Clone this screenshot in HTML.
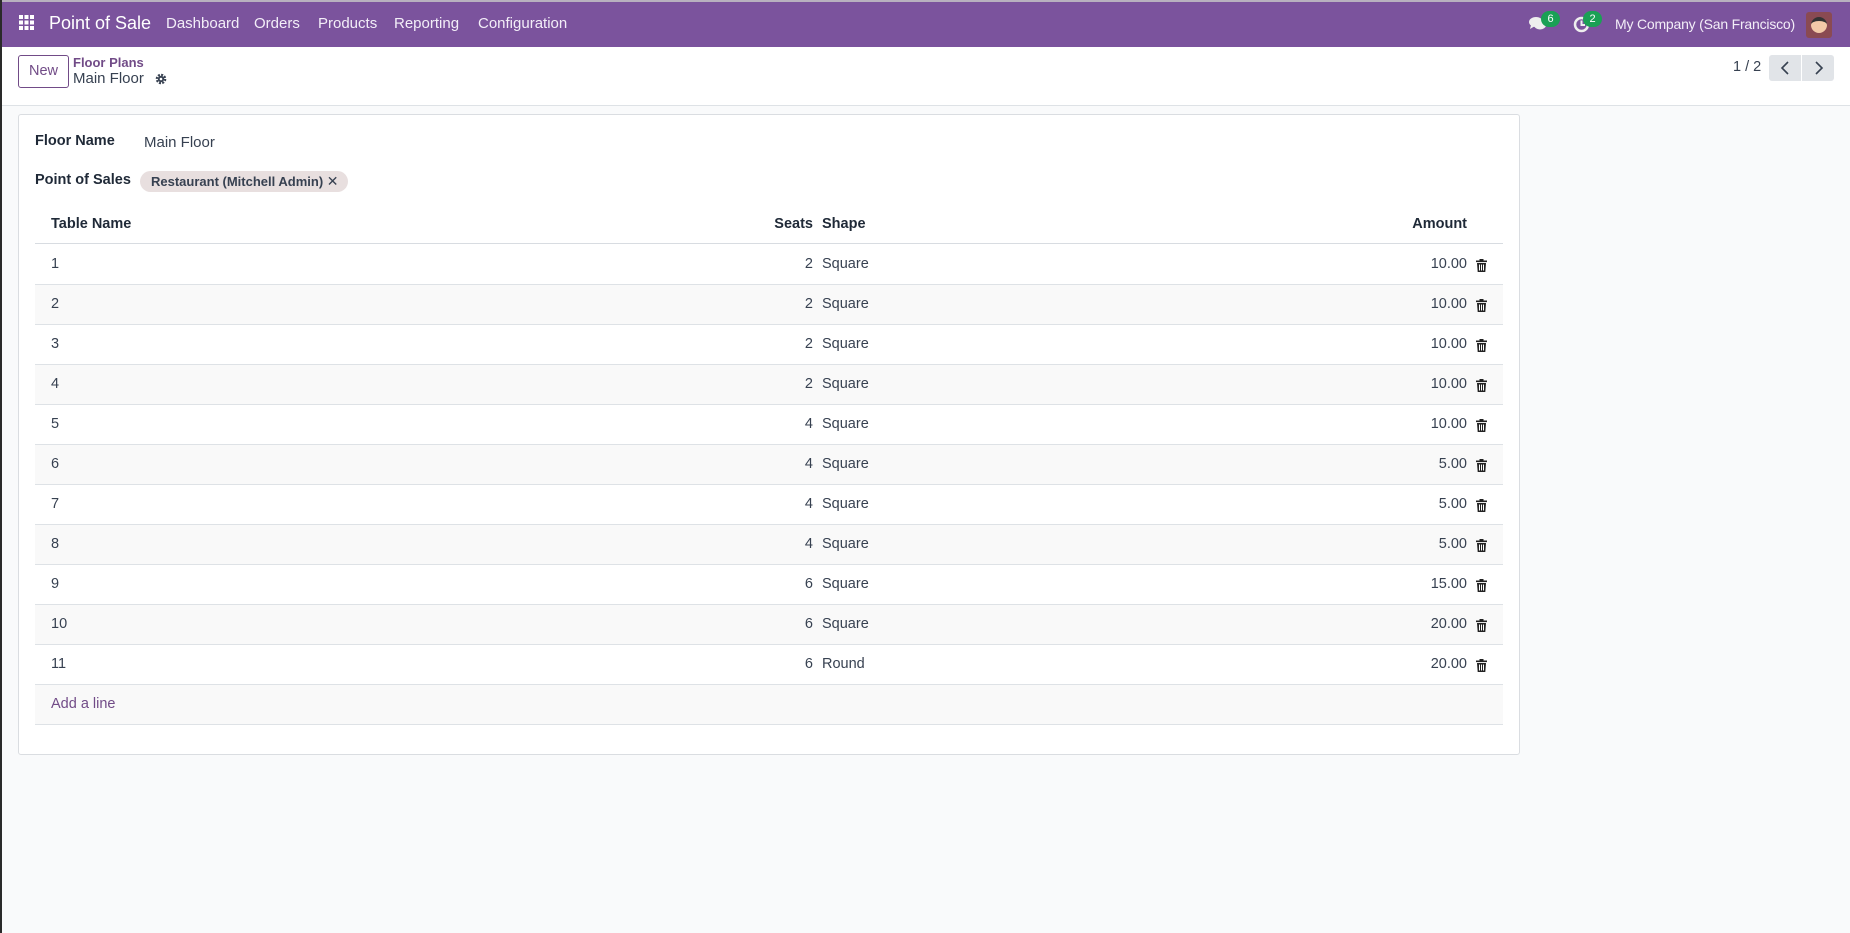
<!DOCTYPE html>
<html><head><meta charset="utf-8">
<style>
*{box-sizing:border-box;margin:0;padding:0}
body{width:1850px;height:933px;overflow:hidden;background:#f9fafb;font-family:"Liberation Sans",sans-serif;color:#374151;font-size:14.5px;position:relative}
.nav{position:absolute;left:0;top:0;width:1850px;height:47px;background:#7b539d;border-top:2px solid #b8b0bf;color:#fff}
.nav span{position:absolute;top:13px;font-size:15px;color:#f3eef8}
.cp{position:absolute;left:0;top:47px;width:1850px;height:59px;background:#fff;border-bottom:1px solid #dee2e6}
.abs{position:absolute}
.btn{position:absolute;left:18px;top:55px;width:51px;height:33px;border:1px solid #714b87;border-radius:3px;color:#714b87;font-size:14.5px;text-align:center;line-height:31px;background:#fff}
.sheet{position:absolute;left:18px;top:114px;width:1502px;height:641px;background:#fff;border:1px solid #dadde1;border-radius:3px}
.lbl{position:absolute;font-weight:bold;color:#1f2937;font-size:14.5px}
.row{position:absolute;left:35px;width:1468px;height:40px;border-bottom:1px solid #dee2e6;font-size:14.5px}
.row.g{background:#f9f9f9}
.row span{position:absolute;top:11px}
.trash{position:absolute;left:1441px;top:14px}
</style></head><body>
<div class="abs" style="left:0;top:0;width:2px;height:933px;background:#2a2a2a;z-index:5"></div>
<div class="nav">
 <svg class="abs" style="left:19px;top:13px" width="15" height="15" viewBox="0 0 15 15" fill="#fff"><rect x="0" y="0" width="4" height="4"/><rect x="5.5" y="0" width="4" height="4"/><rect x="11" y="0" width="4" height="4"/><rect x="0" y="5.5" width="4" height="4"/><rect x="5.5" y="5.5" width="4" height="4"/><rect x="11" y="5.5" width="4" height="4"/><rect x="0" y="11" width="4" height="4"/><rect x="5.5" y="11" width="4" height="4"/><rect x="11" y="11" width="4" height="4"/></svg>
 <span style="left:49px;top:11px;font-size:18px;color:#fff">Point of Sale</span>
 <span style="left:166px">Dashboard</span>
 <span style="left:254px">Orders</span>
 <span style="left:318px">Products</span>
 <span style="left:394px">Reporting</span>
 <span style="left:478px">Configuration</span>
 <svg class="abs" style="left:1529px;top:14px" width="18" height="16" viewBox="0 0 18 16" fill="#eee"><ellipse cx="7" cy="6" rx="7" ry="5"/><path d="M2 9 L1 13 L6 10Z"/><ellipse cx="11" cy="9" rx="6" ry="4.5"/></svg>
 <div class="abs" style="left:1541px;top:9px;width:19px;height:16px;border-radius:8px;background:#1aa055;color:#fff;font-size:11px;text-align:center;line-height:16px">6</div>
 <svg class="abs" style="left:1573px;top:14px" width="17" height="17" viewBox="0 0 17 17"><circle cx="8.5" cy="8.5" r="6.5" fill="none" stroke="#eee" stroke-width="2.5"/><path d="M8.5 4.5V9H12" stroke="#eee" stroke-width="2" fill="none"/></svg>
 <div class="abs" style="left:1583px;top:9px;width:19px;height:16px;border-radius:8px;background:#1aa055;color:#fff;font-size:11px;text-align:center;line-height:16px">2</div>
 <span style="left:1615px;font-size:14px;letter-spacing:-0.2px;top:14px">My Company (San Francisco)</span>
 <div class="abs" style="left:1806px;top:10px;width:26px;height:26px;border-radius:3px;background:#8a4a52"><div style="margin:5px auto;width:16px;height:16px;border-radius:50%;background:#f2c9a8;border-top:4px solid #333"></div></div>
</div>
<div class="cp"></div>
<div class="btn">New</div>
<div class="abs" style="left:73px;top:55px;color:#714b87;font-size:13px;font-weight:bold">Floor Plans</div>
<div class="abs" style="left:73px;top:70px;color:#374151;font-size:15px">Main Floor</div>
<svg class="abs" style="left:148px;top:73px" width="12" height="12" viewBox="0 0 12 12"><circle cx="6" cy="6" r="4.2" fill="none" stroke="#374151" stroke-width="2.2" stroke-dasharray="2 1.3"/><circle cx="6" cy="6" r="3.2" fill="#374151"/><circle cx="6" cy="6" r="1.3" fill="#fff"/></svg>
<div class="abs" style="left:1733px;top:59px;font-size:14.5px;color:#374151">1 / 2</div>
<div class="abs" style="left:1769px;top:55px;width:32px;height:26px;background:#e1e4e8;border-radius:3px 0 0 3px"></div>
<div class="abs" style="left:1802px;top:55px;width:32px;height:26px;background:#e1e4e8;border-radius:0 3px 3px 0"></div>
<svg class="abs" style="left:1780px;top:61px" width="10" height="14" viewBox="0 0 10 14"><path d="M8 1L2 7L8 13" fill="none" stroke="#374151" stroke-width="1.6"/></svg>
<svg class="abs" style="left:1814px;top:61px" width="10" height="14" viewBox="0 0 10 14"><path d="M2 1L8 7L2 13" fill="none" stroke="#374151" stroke-width="1.6"/></svg>

<div class="sheet"></div>
<div class="lbl" style="left:35px;top:133px">Floor Name</div>
<div class="abs" style="left:144px;top:134px;font-size:15px">Main Floor</div>
<div class="lbl" style="left:35px;top:172px">Point of Sales</div>
<div class="abs" style="left:140px;top:171px;width:208px;height:21px;border-radius:11px;background:#e8dfdf;font-size:13px;font-weight:bold;color:#374151;line-height:21px;padding-left:11px">Restaurant (Mitchell Admin) <span style="font-weight:normal;font-size:14px">✕</span></div>

<div class="row" style="top:204px;border-bottom:1px solid #d8dce1;font-weight:bold;color:#1f2937">
 <span style="left:16px;top:12px">Table Name</span>
 <span style="right:690px;top:12px">Seats</span>
 <span style="left:787px;top:12px">Shape</span>
 <span style="right:36px;top:12px">Amount</span>
</div>
<div id="rows"></div>
<script>
var d=[[1,2,'Square','10.00'],[2,2,'Square','10.00'],[3,2,'Square','10.00'],[4,2,'Square','10.00'],[5,4,'Square','10.00'],[6,4,'Square','5.00'],[7,4,'Square','5.00'],[8,4,'Square','5.00'],[9,6,'Square','15.00'],[10,6,'Square','20.00'],[11,6,'Round','20.00']];
var h='';
d.forEach(function(r,i){h+='<div class="row'+(i%2?' g':'')+'" style="top:'+(245+i*40)+'px"><span style="left:16px">'+r[0]+'</span><span style="right:690px">'+r[1]+'</span><span style="left:787px">'+r[2]+'</span><span style="right:36px">'+r[3]+'</span><svg class="trash" width="11" height="13" viewBox="0 0 11 13" fill="#222"><rect x="0" y="1.5" width="11" height="1.6"/><rect x="3.5" y="0" width="4" height="2"/><path d="M1 4h9l-.7 9H1.7Z"/><rect x="3" y="5.5" width="1" height="6" fill="#fff"/><rect x="5" y="5.5" width="1" height="6" fill="#fff"/><rect x="7" y="5.5" width="1" height="6" fill="#fff"/></svg></div>';});
h+='<div class="row g" style="top:685px"><span style="left:16px;color:#714b87">Add a line</span></div>';
document.getElementById('rows').innerHTML=h;
</script>
<style>svg[style*="left:148px"]{left:155px!important}</style>
</body></html>
